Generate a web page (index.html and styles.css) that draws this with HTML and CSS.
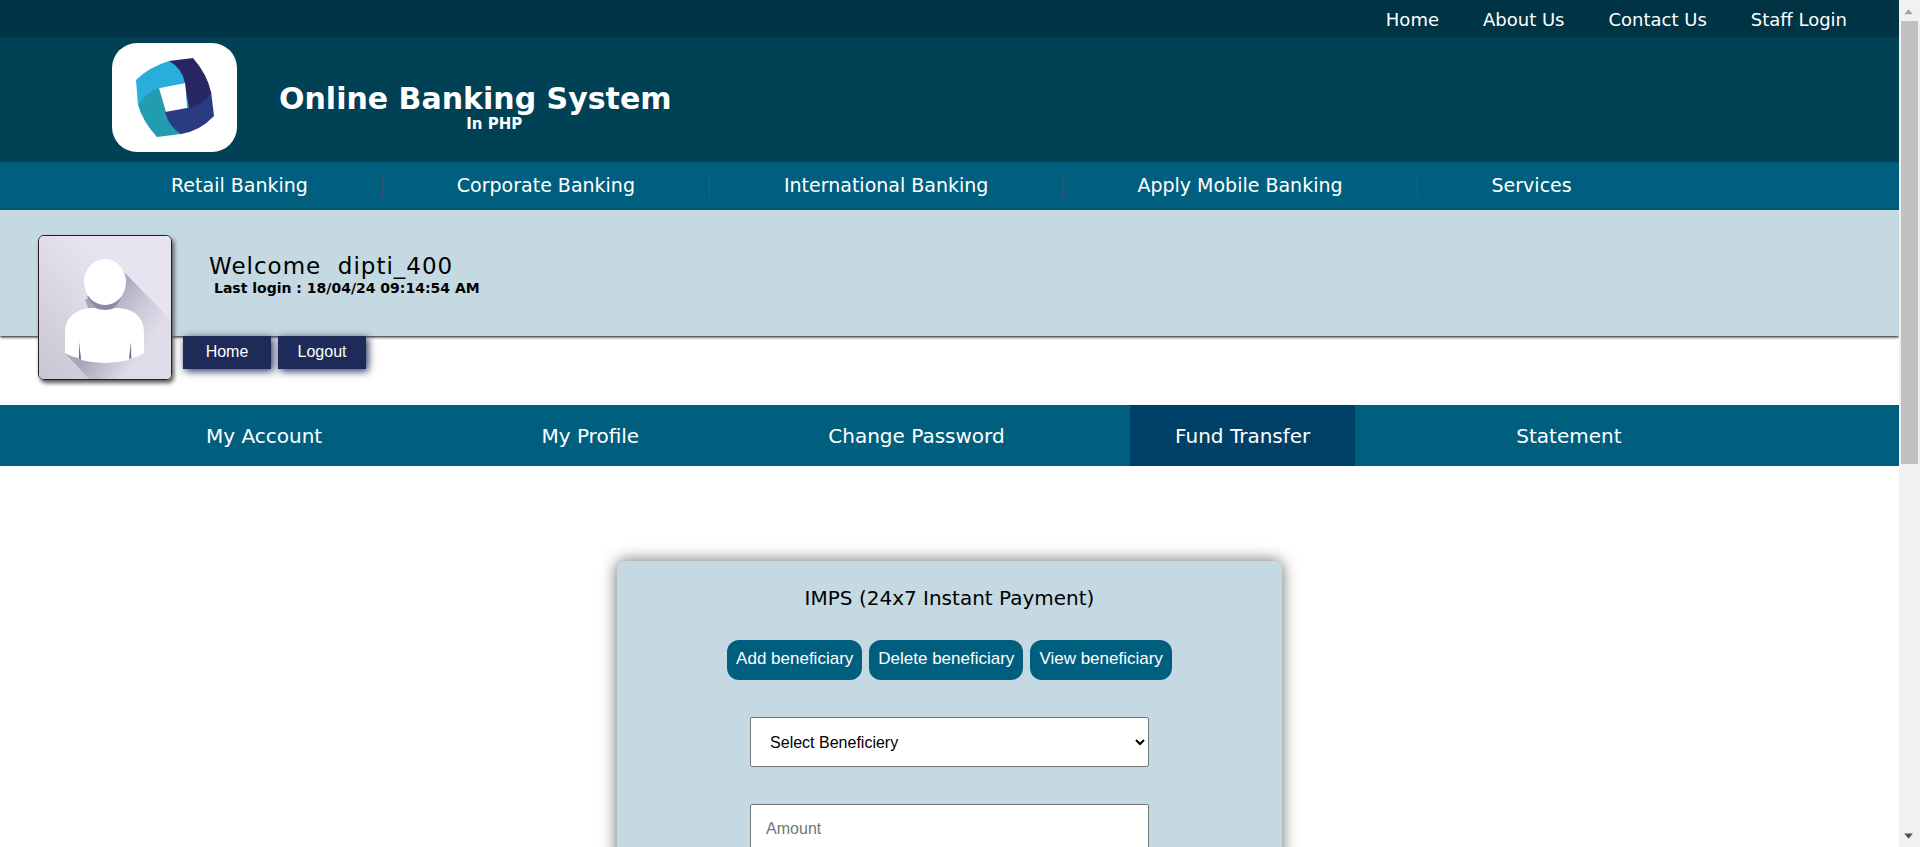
FILE: index.html
```html
<!DOCTYPE html>
<html lang="en">
<head>
<meta charset="utf-8">
<title>Online Banking System</title>
<link rel="stylesheet" href="styles.css">
</head>
<body>
<div class="page">
  <nav class="topbar" aria-label="Site">
    <a href="#">Home</a>
    <a href="#">About Us</a>
    <a href="#">Contact Us</a>
    <a href="#">Staff Login</a>
  </nav>
  <header class="header">
    <div class="logo">
      <svg viewBox="0 0 125 109" role="img" aria-label="Bank logo">
        <path fill="#29aedb" d="M24 37Q37 24 57 18L60 18Q74 26 74 40L48 45Q35 49 26 62Z"/>
        <path fill="#229cb0" d="M26 62Q34 49 47 45L54 69Q60 84 71 91L69 91L45 94Q31 79 26 62Z"/>
        <path fill="#2a3b82" d="M99 48L102 73Q88 88 69 91Q57 84 53 69L75 65Q90 58 99 48Z"/>
        <path fill="#292763" d="M57 18L81 15Q95 31 99 49Q94 60 78 65L76 65L73 40Q70 25 57 18Z"/>
        <path fill="#29aedb" d="M74 49L77 65L75 65Z"/>
      </svg>
    </div>
    <div class="brand">
      <h1 class="brand-name">Online Banking System</h1>
      <p class="brand-sub">In PHP</p>
    </div>
  </header>
  <nav class="mainnav" aria-label="Banking">
    <a href="#">Retail Banking</a>
    <a href="#">Corporate Banking</a>
    <a href="#">International Banking</a>
    <a href="#">Apply Mobile Banking</a>
    <a href="#">Services</a>
  </nav>
  <section class="profile">
    <svg class="avatar" viewBox="0 0 132 143" preserveAspectRatio="none" role="img" aria-label="Profile picture">
      <defs>
        <linearGradient id="bg" x1="0" y1="1" x2="1" y2="0">
          <stop offset="0" stop-color="#c8c6d2"/>
          <stop offset=".45" stop-color="#dedae6"/>
          <stop offset=".65" stop-color="#e7e4ef"/>
          <stop offset="1" stop-color="#e7e4ef"/>
        </linearGradient>
        <linearGradient id="shade" gradientUnits="userSpaceOnUse" x1="70" y1="60" x2="118" y2="96">
          <stop offset="0" stop-color="#a9a5be"/>
          <stop offset=".5" stop-color="#cbc7d7"/>
          <stop offset="1" stop-color="#e0dce8"/>
        </linearGradient>
        <linearGradient id="low" gradientUnits="userSpaceOnUse" x1="50" y1="117" x2="85" y2="143">
          <stop offset="0" stop-color="#aaa6bb"/>
          <stop offset="1" stop-color="#e0dce8"/>
        </linearGradient>
      </defs>
      <rect width="132" height="143" fill="url(#bg)"/>
      <path fill="url(#shade)" d="M85 36L132 84V143H80L46 64Z"/>
      <path fill="url(#low)" d="M26 117L50 143H105L93 117Z"/>
      <path fill="#8e8aa6" d="M48 60Q56 75 66 75Q76 75 82 62Z"/>
      <path fill="#fff" d="M26 117V97C26 82 36 72 56 72Q66 76 76 72C96 72 105 82 105 97V117Q99 121 93 122L92 106L90 124Q66 130 42 124L40 106L40 122Q32 121 26 117Z"/>
      <path fill="#706c8c" d="M40 106L42 124L40 122ZM92 106L92 122L90 123Z"/>
      <ellipse cx="66" cy="46" rx="21" ry="23" fill="#fff"/>
    </svg>
    <div class="greeting">
      <p class="welcome">Welcome&nbsp; dipti_400</p>
      <p class="last-login">Last login : 18/04/24 09:14:54 AM</p>
    </div>
  </section>
  <div class="session">
    <button type="button">Home</button>
    <button type="button">Logout</button>
  </div>
  <nav class="menu" aria-label="Account">
    <a href="#">My Account</a>
    <a href="#">My Profile</a>
    <a href="#">Change Password</a>
    <a href="#" class="active" aria-current="page">Fund Transfer</a>
    <a href="#">Statement</a>
  </nav>
  <form class="card">
    <h2 class="card-title">IMPS (24x7 Instant Payment)</h2>
    <div class="actions">
      <button type="button">Add beneficiary</button>
      <button type="button">Delete beneficiary</button>
      <button type="button">View beneficiary</button>
    </div>
    <select class="field" aria-label="Beneficiary"><option>Select Beneficiery</option></select>
    <input class="field" type="text" placeholder="Amount" aria-label="Amount">
  </form>
</div>
<div class="scrollbar" aria-hidden="true">
  <svg class="arrow" viewBox="0 0 21 21"><path fill="#a3a3a3" d="M5 15L10 9L15 15Z"/></svg>
  <div class="track"><div class="thumb"></div></div>
  <svg class="arrow" viewBox="0 0 21 21"><path fill="#505050" d="M5 7L10 13L15 7Z"/></svg>
</div>
</body>
</html>
```
FILE: styles.css
```css
* { box-sizing: border-box; }

body {
  margin: 0;
  height: 100vh;
  display: grid;
  grid-template-columns: 1fr 21px;
  overflow: hidden;
  background: #fff;
  color: #000;
  font-family: Verdana, "DejaVu Sans", sans-serif;
}

h1, h2, p { margin: 0; }
a { color: #fff; text-decoration: none; }
button, select, input { font-family: Arial, "Liberation Sans", sans-serif; font-size: 16px; }

.page { min-width: 0; overflow: hidden; }

.topbar {
  display: flex;
  justify-content: flex-end;
  align-items: center;
  gap: 44px;
  padding: 9px 52px 7px 0;
  background: #003344;
  font-size: 18px;
  line-height: 21px;
}

.header {
  display: flex;
  align-items: flex-start;
  gap: 42px;
  padding: 6px 112px 10px;
  background: #004155;
  color: #fff;
}
.logo {
  width: 125px;
  height: 109px;
  border-radius: 25px;
  background: #fff;
}
.logo svg { display: block; }
.brand { padding-top: 38px; }
.brand-name { font-size: 30px; line-height: 36px; }
.brand-sub {
  padding-left: 38px;
  font-size: 15px;
  font-weight: bold;
  line-height: 14px;
  text-align: center;
}

.mainnav {
  display: flex;
  padding: 12px 97px 13px;
  background: #005f7f;
  font-size: 19px;
  line-height: 23px;
}
.mainnav a { padding: 0 74px; }
.mainnav a + a { border-left: 1px solid #35587b; }

.profile {
  position: relative;
  height: 126px;
  padding: 43px 209px 0;
  background: #c5d9e2;
  box-shadow: 0 1px 3px #000;
}
.avatar {
  position: absolute;
  left: 38px;
  top: 25px;
  z-index: 1;
  width: 134px;
  height: 145px;
  border: 1px solid #222;
  border-radius: 6px;
  box-shadow: 2px 3px 4px #555;
}
.welcome { font-size: 23px; line-height: 26px; letter-spacing: 1px; }
.last-login {
  padding-left: 5px;
  font-size: 14px;
  font-weight: bold;
  line-height: 18px;
}

.session {
  position: relative;
  display: flex;
  align-items: flex-start;
  gap: 7px;
  height: 69px;
  padding-left: 183px;
}
.session button {
  width: 88px;
  height: 33px;
  padding: 0 0 2px;
  border: 0;
  background: #1e2b58;
  box-shadow: 2px 2px 8px #1e2b58;
  color: #fff;
}

.menu {
  display: grid;
  grid-template-columns: repeat(5, 1fr);
  justify-items: center;
  padding: 0 167px 0 101px;
  background: #005f7f;
  font-size: 20px;
  line-height: 59px;
  text-align: center;
}
.menu a { width: 225px; padding-top: 2px; }
.menu .active { background: #004066; }

.card {
  display: flex;
  flex-direction: column;
  align-items: center;
  width: 35%;
  min-height: 600px;
  margin: 95px auto 0;
  padding-top: 24px;
  border-radius: 7px;
  background: #c5d9e2;
  box-shadow: 0 0 16px #666;
}
.card-title { font-size: 20px; font-weight: normal; line-height: 26px; }
.actions { display: flex; gap: 7px; margin: 29px 0 37px; }
.actions button {
  height: 40px;
  padding: 0 9px 2px;
  border: 0;
  border-radius: 12px;
  background: #005f7f;
  color: #fff;
  font-size: 17px;
}
.field {
  width: 60%;
  height: 50px;
  margin-bottom: 37px;
  padding: 0 15px;
  border: 1px solid #767676;
  border-radius: 2px;
  background: #fff;
}
select.field { padding-right: 0; color: #000; }

.scrollbar {
  display: flex;
  flex-direction: column;
  padding: 0 2px 0 1px;
  background: #f1f1f1;
}
.arrow { width: 18px; height: 21px; }
.track { flex: 1; padding-left: 1px; }
.thumb { height: 55%; background: #c1c1c1; }
```
